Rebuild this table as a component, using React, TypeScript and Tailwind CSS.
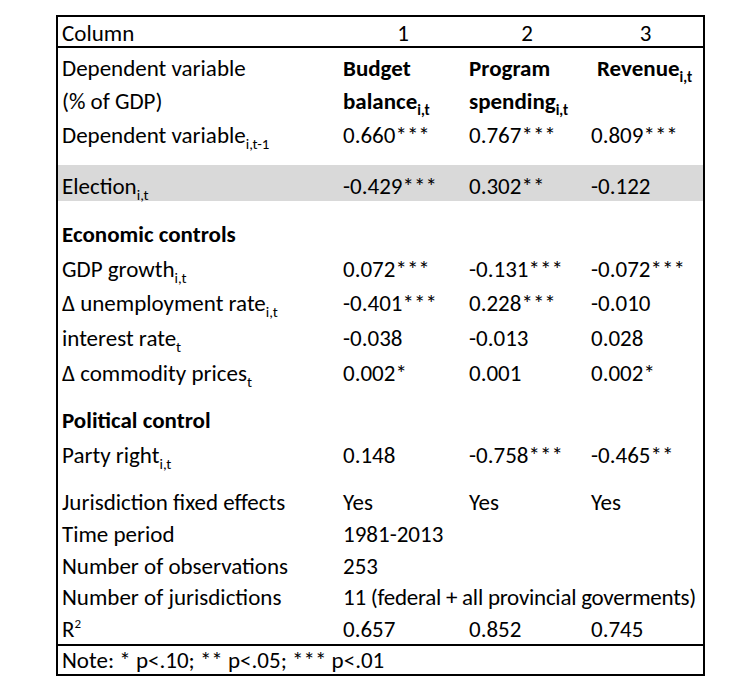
import React from "react";

const Sub = ({ children, bold }: { children: React.ReactNode; bold?: boolean }) => (
  <span className={`relative top-[6px] text-[15px] leading-none ${bold ? "font-bold" : ""}`}>{children}</span>
);

type RowProps = {
  h: string;
  cells: React.ReactNode[];
  gray?: boolean;
  shift?: string;
};

const Row = ({ h, cells, gray, shift }: RowProps) => (
  <div className={`grid grid-cols-[282px_126px_122px_115px] ${h} ${gray ? "bg-[#d9d9d9]" : ""}`}>
    {cells.map((c, i) => (
      <div
        key={i}
        className={`flex items-center whitespace-nowrap ${i === 0 ? "pl-[4px]" : "pl-[3px]"} ${shift ?? ""}`}
      >
        {c}
      </div>
    ))}
  </div>
);

const Spacer = ({ h }: { h: string }) => <div className={h} />;

export default function App() {
  return (
    <div className="min-h-[694px] w-[752px] bg-white pt-[15px] font-['Carlito','Lato',sans-serif] text-[23px] leading-[24px] text-black">
      <div className="ml-[56px] w-[649px] border-2 border-black">
        {/* header */}
        <div className="grid h-[31px] grid-cols-[282px_126px_122px_115px] border-b-2 border-black pt-[3px]">
          <div className="flex items-center pl-[4px]">Column</div>
          <div className="flex items-center justify-center">1</div>
          <div className="flex items-center justify-center">2</div>
          <div className="flex items-center justify-center">3</div>
        </div>
        {/* body */}
        <div className="h-[596px]">
          <Row
            h="h-[36px]"
            shift="pt-[4px]"
            cells={[
              "Dependent variable",
              <span className="font-bold">Budget</span>,
              <span className="font-bold">Program</span>,
              <span className="pl-[6px] font-bold">
                Revenue<Sub bold>i,t</Sub>
              </span>,
            ]}
          />
          <Row
            h="h-[33px]"
            cells={[
              "(% of GDP)",
              <span className="font-bold">
                balance<Sub bold>i,t</Sub>
              </span>,
              <span className="font-bold">
                spending<Sub bold>i,t</Sub>
              </span>,
              "",
            ]}
          />
          <Row
            h="h-[36px]"
            cells={[
              <span>
                Dependent variable<Sub>i,t-1</Sub>
              </span>,
              "0.660***",
              "0.767***",
              "0.809***",
            ]}
          />
          <Spacer h="h-[12px]" />
          <Row
            h="h-[36px]"
            gray
            shift="pt-[6px]"
            cells={[
              <span>
                Election<Sub>i,t</Sub>
              </span>,
              "-0.429***",
              "0.302**",
              "-0.122",
            ]}
          />
          <Spacer h="h-[16px]" />
          <Row h="h-[34px]" cells={[<span className="font-bold">Economic controls</span>, "", "", ""]} />
          <Row
            h="h-[35px]"
            cells={[
              <span>
                GDP growth<Sub>i,t</Sub>
              </span>,
              "0.072***",
              "-0.131***",
              "-0.072***",
            ]}
          />
          <Row
            h="h-[34px]"
            cells={[
              <span>
                Δ unemployment rate<Sub>i,t</Sub>
              </span>,
              "-0.401***",
              "0.228***",
              "-0.010",
            ]}
          />
          <Row
            h="h-[35px]"
            cells={[
              <span>
                interest rate<Sub>t</Sub>
              </span>,
              "-0.038",
              "-0.013",
              "0.028",
            ]}
          />
          <Row
            h="h-[35px]"
            cells={[
              <span>
                Δ commodity prices<Sub>t</Sub>
              </span>,
              "0.002*",
              "0.001",
              "0.002*",
            ]}
          />
          <Spacer h="h-[13px]" />
          <Row h="h-[34px]" cells={[<span className="font-bold">Political control</span>, "", "", ""]} />
          <Row
            h="h-[35px]"
            cells={[
              <span>
                Party right<Sub>i,t</Sub>
              </span>,
              "0.148",
              "-0.758***",
              "-0.465**",
            ]}
          />
          <Spacer h="h-[14px]" />
          <Row h="h-[32px]" cells={["Jurisdiction fixed effects", "Yes", "Yes", "Yes"]} />
          <Row h="h-[32px]" cells={["Time period", "1981-2013", "", ""]} />
          <Row h="h-[31px]" cells={["Number of observations", "253", "", ""]} />
          <div className="grid h-[32px] grid-cols-[282px_363px]">
            <div className="flex items-center whitespace-nowrap pl-[4px]">Number of jurisdictions</div>
            <div className="flex items-center whitespace-nowrap pl-[3px] tracking-[-0.25px]">
              11 (federal + all provincial goverments)
            </div>
          </div>
          <Row
            h="h-[31px]"
            cells={[
              <span>
                R<span className="relative -top-[9px] text-[13px] leading-none">2</span>
              </span>,
              "0.657",
              "0.852",
              "0.745",
            ]}
          />
        </div>
        {/* note */}
        <div className="flex h-[30px] items-center border-t-2 border-black pl-[4px]">
          Note: * p&lt;.10; ** p&lt;.05; *** p&lt;.01
        </div>
      </div>
    </div>
  );
}
